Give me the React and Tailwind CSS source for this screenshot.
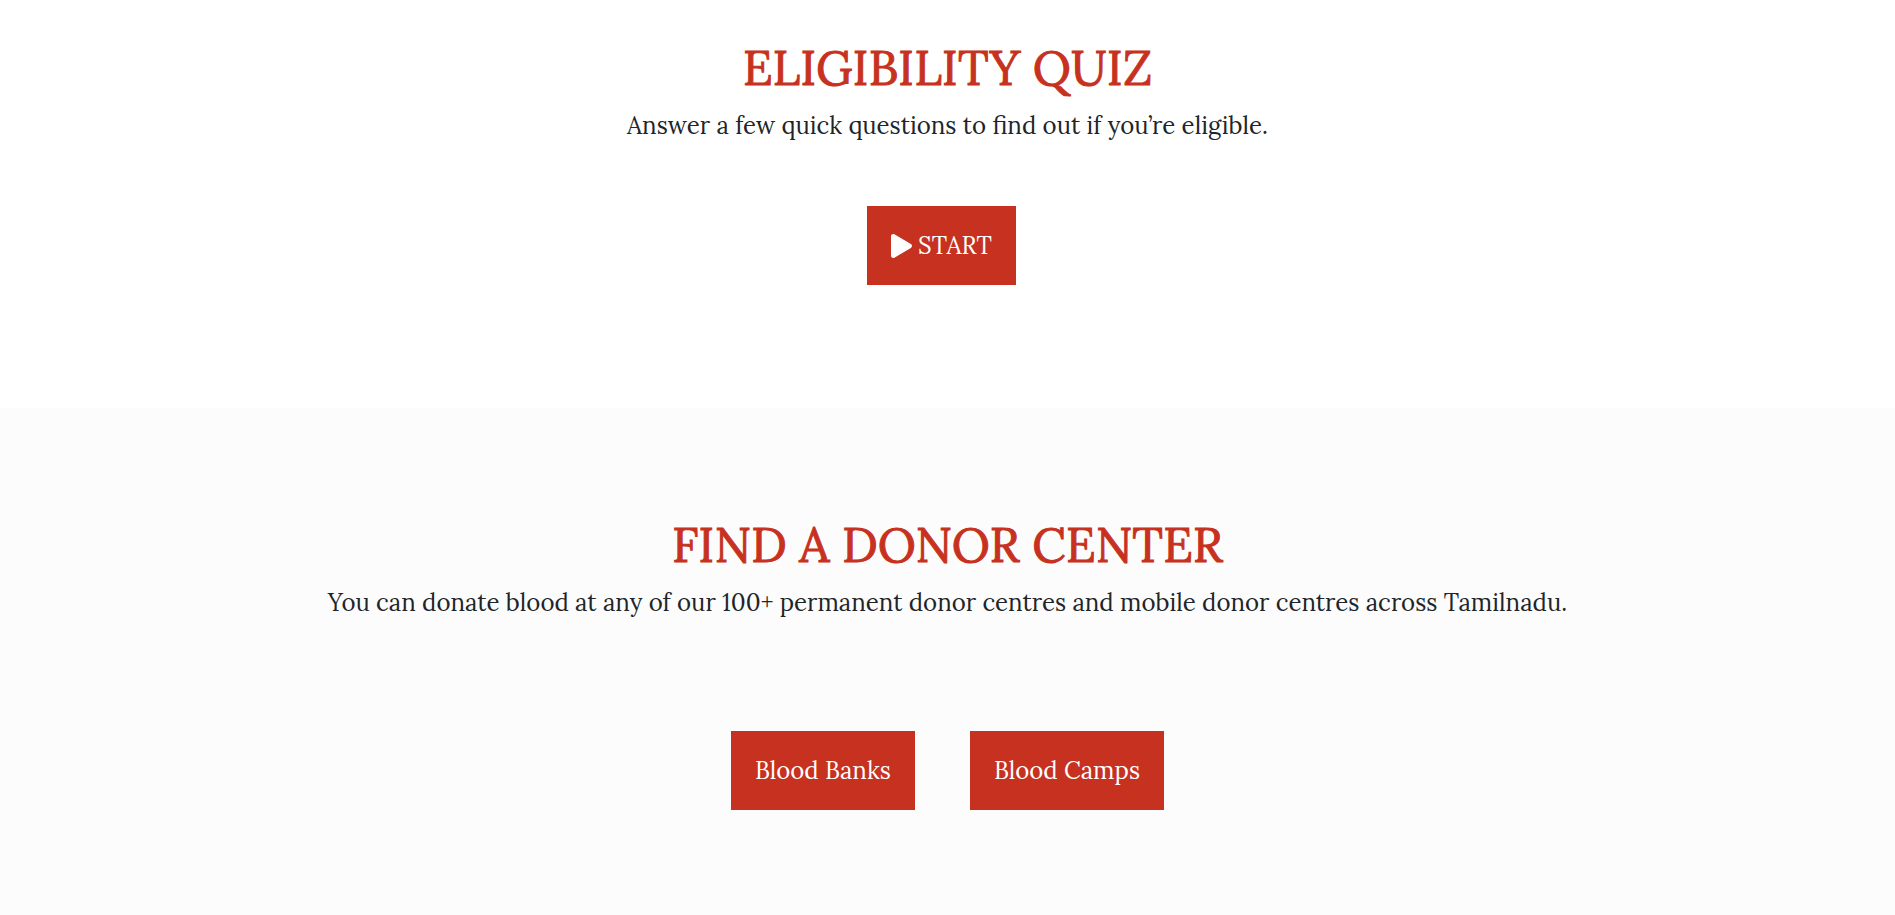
function Section({ title, text, className, children }) {
  return (
    <section className={`px-6 text-center ${className}`}>
      <h2 className="text-5xl leading-[60px] text-[#c73120] [-webkit-text-stroke:1px_#c73120]">{title}</h2>
      <p className="mt-2.5 text-2xl leading-9 text-[#212529]">{text}</p>
      {children}
    </section>
  );
}

const buttonClass =
  "flex h-[79px] cursor-pointer items-center justify-center gap-[6px] bg-[#c73120] px-6 text-2xl whitespace-nowrap text-white";

function PlayIcon() {
  return (
    <svg viewBox="0 0 448 512" className="h-6 w-[21px] shrink-0" fill="currentColor" aria-hidden="true">
      <path d="M424.4 214.7L72.4 6.6C43.8-10.3 0 6.1 0 47.9V464c0 37.5 40.7 60.1 72.4 41.3l352-208c31.4-18.5 31.5-64.1 0-82.6z" />
    </svg>
  );
}

export default function App() {
  return (
    <main className="flex min-h-screen flex-col bg-white font-['Lora','Liberation_Serif',serif]">
      <Section
        title="ELIGIBILITY QUIZ"
        text="Answer a few quick questions to find out if you’re eligible."
        className="pt-[38px] pb-[123px]"
      >
        <div className="mt-[62px] flex justify-center pr-3">
          <button type="button" className={`${buttonClass} min-w-[149px]`}>
            <PlayIcon />
            START
          </button>
        </div>
      </Section>
      <Section
        title="FIND A DONOR CENTER"
        text="You can donate blood at any of our 100+ permanent donor centres and mobile donor centres across Tamilnadu."
        className="grow bg-[#fcfcfc] pt-[107px] pb-[104px]"
      >
        <div className="mt-[110px] flex flex-wrap justify-center gap-[55px]">
          <button type="button" className={`${buttonClass} min-w-[184px]`}>Blood Banks</button>
          <button type="button" className={`${buttonClass} min-w-[194px]`}>Blood Camps</button>
        </div>
      </Section>
    </main>
  );
}
